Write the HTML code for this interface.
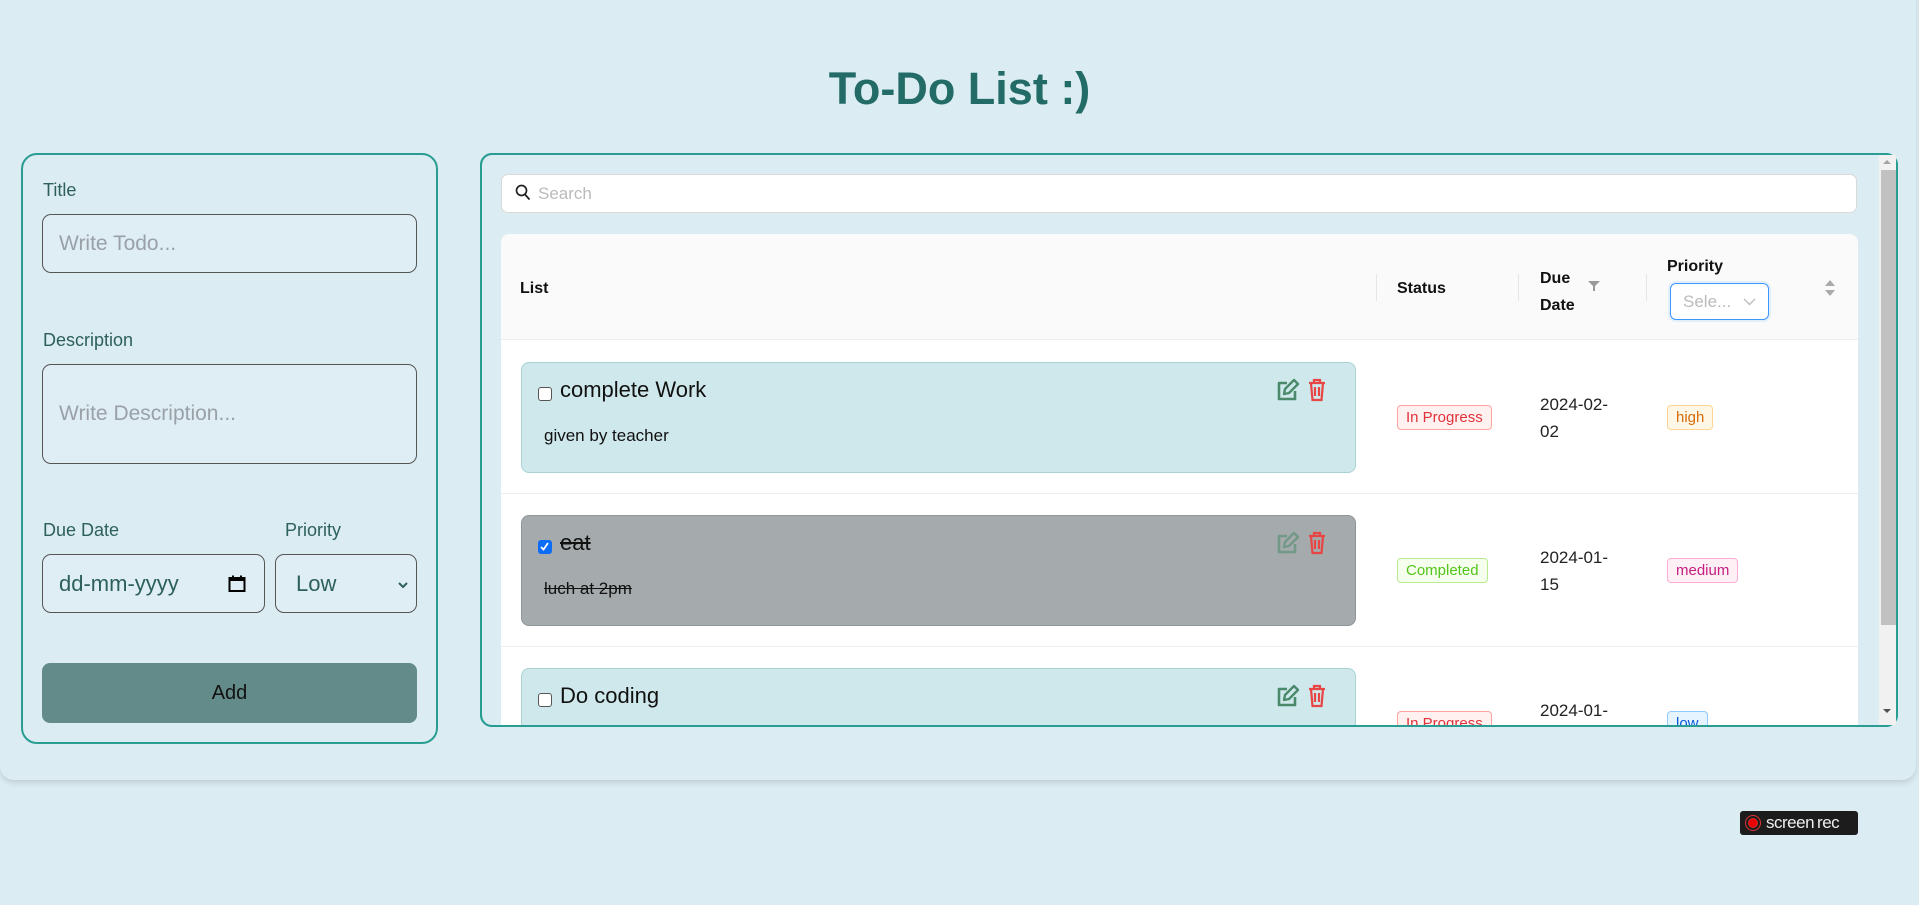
<!DOCTYPE html>
<html><head><meta charset="utf-8"><style>
*{box-sizing:border-box;margin:0;padding:0}
body{width:1919px;height:905px;background:#dbecf2;font-family:"Liberation Sans",sans-serif;position:relative;overflow:hidden}
.card{position:absolute;left:0;top:-20px;width:1916px;height:800px;border-radius:0 0 14px 14px;background:#dbecf2;box-shadow:0 3px 6px rgba(0,0,0,.12)}
h1{position:absolute;left:0;width:1919px;top:63px;text-align:center;font-size:45px;font-weight:bold;color:#236b66}
.abs{position:absolute}
.lp{left:21px;top:153px;width:417px;height:591px;border:2px solid #2a9d93;border-radius:16px}
.lbl{position:absolute;font-size:18px;color:#2d5f5c}
.inp{position:absolute;border:1px solid #555;border-radius:9px;background:#deeef4;font-size:21px;color:#9aa0a8;padding-left:16px;display:flex;align-items:center}
.btn{position:absolute;left:42px;top:663px;width:375px;height:60px;background:#638b8a;border-radius:8px;font-size:20px;color:#111;display:flex;align-items:center;justify-content:center}
.rp{left:480px;top:153px;width:1418px;height:574px;border:2px solid #2a9d93;border-radius:12px;overflow:hidden}
.search{left:501px;top:174px;width:1356px;height:39px;background:#fff;border:1px solid #d9d9d9;border-radius:7px;font-size:17px;color:#bbb;padding-left:36px;line-height:37px}
.thead{left:501px;top:234px;width:1357px;height:106px;background:#fafafa;border-radius:8px 8px 0 0;border-bottom:1px solid #eee}
.tbody{left:501px;top:340px;width:1357px;height:390px;background:#fff}
.th{position:absolute;font-size:16px;font-weight:bold;color:#111}
.sep{position:absolute;width:1px;height:27px;top:274px;background:#e6e6e6}
.row{position:absolute;left:501px;width:1357px;height:1px;background:#eee}
.item{position:absolute;left:521px;width:835px;height:111px;border:1px solid #a9d3d3;border-radius:8px;background:#cfe8eb}
.item.done{background:#a5aaac;border-color:#8f9697}
.cb{position:absolute;left:16px;top:24px;width:14px;height:14px;border:1.5px solid #555;border-radius:3px;background:#fff}
.it{position:absolute;left:38px;top:14px;font-size:22px;color:#111}
.id{position:absolute;left:22px;top:63px;font-size:17px;color:#111}
.ic{position:absolute;right:20px;top:14px}
.tag{position:absolute;font-size:15px;padding:0 8px;height:25px;line-height:23px;border-radius:4px;border:1px solid}
.red{color:#e0323a;background:#fff1f0;border-color:#ffa39e}
.grn{color:#52c41a;background:#f6ffed;border-color:#b7eb8f}
.org{color:#d46b08;background:#fff7e6;border-color:#ffd591}
.pnk{color:#c41d7f;background:#fff0f6;border-color:#ffadd2}
.blu{color:#0958d9;background:#e6f4ff;border-color:#91caff}
.dt{position:absolute;font-size:17px;color:#222;line-height:27px}
</style></head><body>
<div class="card"></div>
<h1>To-Do List :)</h1>
<div class="abs lp"></div>
<div class="lbl" style="left:43px;top:180px">Title</div>
<div class="inp" style="left:42px;top:214px;width:375px;height:59px">Write Todo...</div>
<div class="lbl" style="left:43px;top:330px">Description</div>
<div class="inp" style="left:42px;top:364px;width:375px;height:100px">Write Description...</div>
<div class="lbl" style="left:43px;top:520px">Due Date</div>
<div class="lbl" style="left:285px;top:520px">Priority</div>
<div class="inp" style="left:42px;top:554px;width:223px;height:59px;color:#2d5f5c;font-size:22px">dd-mm-yyyy
<svg style="position:absolute;right:18px;top:20px" width="18" height="18" viewBox="0 0 18 18"><rect x="1.5" y="3" width="15" height="13" fill="none" stroke="#000" stroke-width="2"/><rect x="1.5" y="3" width="15" height="3" fill="#000"/><rect x="4" y="0.5" width="2" height="3" fill="#000"/><rect x="12" y="0.5" width="2" height="3" fill="#000"/></svg></div>
<div class="inp" style="left:275px;top:554px;width:142px;height:59px;color:#2d5f5c;font-size:22px;padding-left:20px">Low
<svg style="position:absolute;right:8px;top:27px" width="10" height="7" viewBox="0 0 10 7"><path d="M1 1l4 4 4-4" fill="none" stroke="#2d5f5c" stroke-width="2"/></svg></div>
<div class="btn">Add</div>

<div class="abs rp"></div>
<div class="abs search">Search</div>
<svg class="abs" style="left:515px;top:184px" width="16" height="18" viewBox="0 0 16 18"><circle cx="6.5" cy="6.5" r="5" fill="none" stroke="#222" stroke-width="1.7"/><path d="M10 10.5l4.5 5" stroke="#222" stroke-width="1.8"/></svg>
<div class="abs thead"></div>
<div class="abs tbody"></div>
<div class="th" style="left:520px;top:280px">List</div>
<div class="sep" style="left:1376px"></div>
<div class="th" style="left:1397px;top:280px">Status</div>
<div class="sep" style="left:1518px"></div>
<div class="th" style="left:1540px;top:265px;line-height:27px">Due<br>Date</div>
<svg class="abs" style="left:1588px;top:280px" width="12" height="12" viewBox="0 0 12 12"><path d="M0 1h12L7 6v5H5V6z" fill="#999"/></svg>
<div class="sep" style="left:1646px"></div>
<div class="th" style="left:1667px;top:258px">Priority</div>
<div class="abs" style="left:1670px;top:283px;width:99px;height:37px;border:1.5px solid #4096ff;border-radius:6px;background:#fff;font-size:17px;color:#bbb;padding:8px 0 0 12px;box-shadow:0 0 0 2px rgba(5,145,255,.1)">Sele...
<svg style="position:absolute;right:12px;top:14px" width="13" height="8" viewBox="0 0 13 8"><path d="M1 1l5.5 5.5L12 1" fill="none" stroke="#bbb" stroke-width="1.3"/></svg></div>
<svg class="abs" style="left:1824px;top:279px" width="12" height="18" viewBox="0 0 12 18"><path d="M6 1l5 6H1z M6 17l5-6H1z" fill="#aaa"/></svg>

<div class="row" style="top:493px"></div>
<div class="row" style="top:646px"></div>

<div class="item" style="top:362px"><div class="cb"></div><div class="it">complete Work</div><div class="id">given by teacher</div>
<div class="ic"><svg width="60" height="26" viewBox="0 0 60 26"><path d="M12 6H4v16h16v-8" fill="none" stroke="#4a8a6a" stroke-width="2.6" stroke-linejoin="round"/><path d="M9 17l1-5 9-9 4 4-9 9z" fill="none" stroke="#4a8a6a" stroke-width="2.4" stroke-linejoin="round"/><g fill="none" stroke="#e84545" stroke-width="2.2"><path d="M34 6h16M39 6V3h6v3M36 6l1.5 17h9L48 6M40 10v9M44 10v9"/></g></svg></div></div>
<div class="item done" style="top:515px"><div class="cb" style="background:#0b6cf5;border-color:#0b6cf5"><svg width="11" height="11" viewBox="0 0 11 11" style="position:absolute;left:0;top:0"><path d="M2 6l2.5 2.5L9 2" fill="none" stroke="#fff" stroke-width="1.8"/></svg></div><div class="it" style="text-decoration:line-through">eat </div><div class="id" style="text-decoration:line-through">luch at 2pm</div>
<div class="ic" style="opacity:.55"><svg width="60" height="26" viewBox="0 0 60 26"><path d="M12 6H4v16h16v-8" fill="none" stroke="#4a8a6a" stroke-width="2.6" stroke-linejoin="round"/><path d="M9 17l1-5 9-9 4 4-9 9z" fill="none" stroke="#4a8a6a" stroke-width="2.4" stroke-linejoin="round"/></svg></div>
<div class="ic"><svg width="60" height="26" viewBox="0 0 60 26"><g fill="none" stroke="#e84545" stroke-width="2.2"><path d="M34 6h16M39 6V3h6v3M36 6l1.5 17h9L48 6M40 10v9M44 10v9"/></g></svg></div></div>
<div class="item" style="top:668px;height:80px"><div class="cb"></div><div class="it">Do coding</div>
<div class="ic"><svg width="60" height="26" viewBox="0 0 60 26"><path d="M12 6H4v16h16v-8" fill="none" stroke="#4a8a6a" stroke-width="2.6" stroke-linejoin="round"/><path d="M9 17l1-5 9-9 4 4-9 9z" fill="none" stroke="#4a8a6a" stroke-width="2.4" stroke-linejoin="round"/><g fill="none" stroke="#e84545" stroke-width="2.2"><path d="M34 6h16M39 6V3h6v3M36 6l1.5 17h9L48 6M40 10v9M44 10v9"/></g></svg></div></div>

<div class="tag red" style="left:1397px;top:405px">In Progress</div>
<div class="dt" style="left:1540px;top:391px">2024-02-<br>02</div>
<div class="tag org" style="left:1667px;top:405px">high</div>
<div class="tag grn" style="left:1397px;top:558px">Completed</div>
<div class="dt" style="left:1540px;top:544px">2024-01-<br>15</div>
<div class="tag pnk" style="left:1667px;top:558px">medium</div>
<div class="tag red" style="left:1397px;top:711px">In Progress</div>
<div class="dt" style="left:1540px;top:697px">2024-01-</div>
<div class="tag blu" style="left:1667px;top:711px">low</div>

<!-- cover below right panel -->
<div class="abs" style="left:478px;top:727px;width:1422px;height:40px;background:#dbecf2"></div>
<div class="abs" style="left:480px;top:153px;width:1418px;height:574px;border:2px solid #2a9d93;border-radius:12px"></div>
<div class="abs" style="left:1879px;top:155px;width:17px;height:570px;background:#f1f1f1"></div>
<div class="abs" style="left:1881px;top:170px;width:15px;height:455px;background:#c1c1c1"></div>
<svg class="abs" style="left:1882px;top:159px" width="10" height="6"><path d="M1 5l4-4 4 4z" fill="#a3a3a3"/></svg>
<svg class="abs" style="left:1882px;top:708px" width="10" height="6"><path d="M1 1l4 4 4-4z" fill="#505050"/></svg>

<div class="abs" style="left:1740px;top:811px;width:118px;height:24px;background:#1c1c1c;border-radius:3px;color:#eee;font-size:17px;line-height:23px;padding-left:26px;letter-spacing:-.5px">screen<b style="font-weight:normal;margin-left:3px">rec</b>
<div style="position:absolute;left:6px;top:5px;width:14px;height:14px;border-radius:50%;background:#e00;box-shadow:0 0 0 1px #c33 inset;border:2px solid #1c1c1c;outline:1px solid #d33"></div></div>
</body></html>
